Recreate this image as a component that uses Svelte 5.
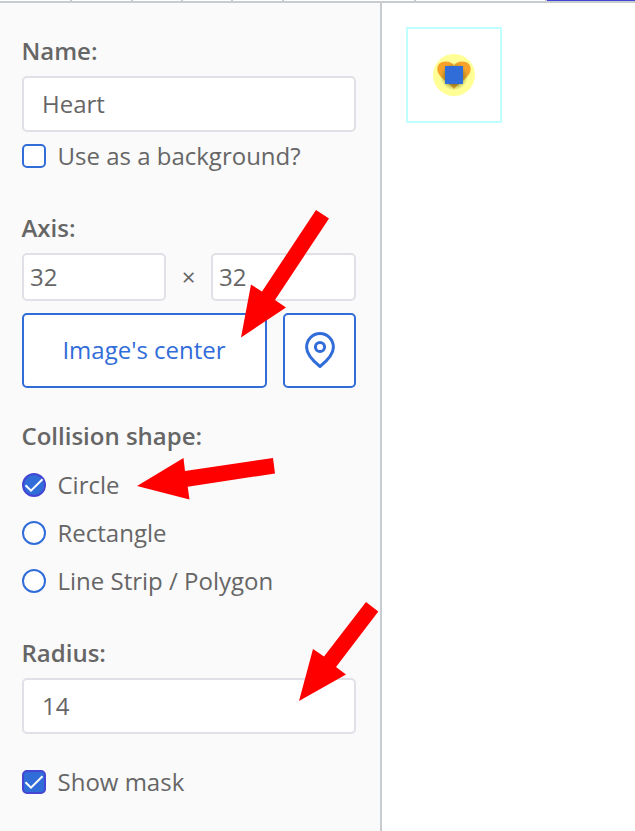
<script>
  let name = $state('Heart');
  let background = $state(false);
  let axisX = $state('32');
  let axisY = $state('32');
  let shape = $state('Circle');
  let radius = $state('14');
  let mask = $state(true);
  const shapes = ['Circle', 'Rectangle', 'Line Strip / Polygon'];
  const ticks = [70, 131, 181, 231, 282, 414, 545];
</script>

{#snippet box(on, round)}
  <span class="box" class:on class:round>
    {#if on}
      <svg width="24" height="24" viewBox="0 0 24 24"><path d="M3.5 12.2 9 17.6 20.5 6.2" fill="none" stroke="#fff" stroke-width="2" /></svg>
    {/if}
  </span>
{/snippet}

<div class="app">
  <header>
    {#each ticks as x}<i class="tick" style="left: {x}px"></i>{/each}
    <i class="active"></i>
  </header>
  <main>
    <aside>
      <label class="title" for="name">Name:</label>
      <input id="name" class="wide" bind:value={name} />
      <label class="option background">
        <input type="checkbox" bind:checked={background} />
        {@render box(background, false)}<span>Use as a background?</span>
      </label>

      <div class="title axis-title">Axis:</div>
      <div class="axis">
        <input class="short" bind:value={axisX} aria-label="X" />
        <span class="times">×</span>
        <input class="short second" bind:value={axisY} aria-label="Y" />
      </div>
      <div class="buttons">
        <button class="center">Image's center</button>
        <button class="pin" aria-label="Pin">
          <svg width="36" height="40" viewBox="0 0 36 40" fill="none" stroke="#316dd9" stroke-width="3">
            <path d="M18 36.5C12.2 31.8 4.6 24.5 4.6 17.2A13.4 13.7 0 0 1 31.4 17.2C31.4 24.5 23.8 31.8 18 36.5Z" stroke-linejoin="round" />
            <circle cx="18" cy="17" r="4.6" />
          </svg>
        </button>
      </div>

      <div class="title shape-title">Collision shape:</div>
      <div class="shapes">
        {#each shapes as s}
          <label class="option">
            <input type="radio" value={s} bind:group={shape} />
            {@render box(shape === s, true)}<span>{s}</span>
          </label>
        {/each}
      </div>

      <label class="title radius-title" for="radius">Radius:</label>
      <input id="radius" class="wide" bind:value={radius} />
      <label class="option mask">
        <input type="checkbox" bind:checked={mask} />
        {@render box(mask, false)}<span>Show mask</span>
      </label>
    </aside>

    <section>
      <svg class="preview" width="96" height="96" viewBox="0 0 96 96">
        <defs>
          <radialGradient id="shade">
            <stop offset="0.55" stop-color="#555a10" stop-opacity="0.6" />
            <stop offset="1" stop-color="#8a8a20" stop-opacity="0" />
          </radialGradient>
        </defs>
        <rect x="1" y="1" width="94" height="94" fill="#fff" stroke="#bfffff" stroke-width="2" />
        <circle cx="48" cy="48" r="21" fill="#ffff96" />
        <path d="M48 62C45.5 58.5 41 56 37.5 52.5C33.5 48.5 31.3 46 31.3 42C31.3 37.5 34.5 34.5 39.5 34.5C44 34.5 47 36 48 39C49 36 52 34.5 56.5 34.5C61.5 34.5 64.7 37.5 64.7 42C64.7 46 62.5 48.5 58.5 52.5C55 56 50.5 58.5 48 62Z" fill="#f8a22b" />
        <circle cx="48" cy="49.5" r="14" fill="url(#shade)" />
        <rect x="39" y="39" width="18" height="18" fill="#316dd9" />
      </svg>
    </section>
  </main>

  <svg class="arrows" width="635" height="831" viewBox="0 0 635 831" fill="#f00">
    <path d="M316 210 329 218.5 275 300 286 307.5 241 337.5 251 284.5 262 291.5Z" />
    <path d="M137 486 183.5 458 185 471 273 458 275 473.5 187.7 486.7 189.5 499.5Z" />
    <path d="M366 602 378.3 611.5 336 667 346 674.5 299 701 313 649 324 656.5Z" />
  </svg>
</div>

<style>
  .app {
    position: relative;
    width: 635px;
    height: 831px;
    overflow: hidden;
    display: flex;
    flex-direction: column;
    background: #fff;
    color: #666;
    font: 24px/36px "Open Sans", sans-serif;
  }
  header {
    position: relative;
    flex: none;
    box-sizing: border-box;
    height: 3px;
    border-bottom: 2px solid #c7ccd1;
  }
  .tick { position: absolute; top: 0; width: 2px; height: 1px; background: #c7ccd1; }
  .active { position: absolute; top: 0; left: 547px; right: 0; height: 1px; background: #4546d3; }
  main { flex: 1; display: flex; min-height: 0; }
  aside {
    box-sizing: border-box;
    width: 382px;
    padding: 30px 24px 0 22px;
    display: flex;
    flex-direction: column;
    background: #fafafa;
    border-right: 2px solid #c7ccd1;
  }
  section { padding: 24px; }
  .preview { display: block; }
  .title { height: 36px; font-weight: 600; margin-bottom: 7px; text-indent: -0.5px; }
  input:not([type]) {
    box-sizing: border-box;
    border: 2px solid #e0e0e6;
    border-radius: 5px;
    background: #fff;
    color: #666;
    font: inherit;
    outline: 0;
    margin: 0;
  }
  input.wide:not([type]) { width: 334px; height: 56px; padding: 0 18px 2px; }
  input.short:not([type]) { width: 144px; height: 48px; padding: 0 6px 2px; }
  input.second:not([type]) { width: 145px; }
  .option { position: relative; height: 36px; display: flex; align-items: center; gap: 11.5px; }
  .option input { position: absolute; opacity: 0; margin: 0; }
  .box {
    box-sizing: border-box;
    width: 24px;
    height: 24px;
    border: 2px solid #316dd9;
    border-radius: 5px;
    background: #fff;
    display: flex;
  }
  .box svg { margin: -2px; flex: none; }
  .box.round { border-radius: 50%; }
  .box.on { background: #316dd9; border-color: #4546d3; }
  .background { margin-top: 6px; }
  .axis-title { margin-top: 36px; }
  .axis { display: flex; justify-content: space-between; height: 48px; align-items: center; }
  .times { line-height: 48px; }
  .buttons { display: flex; gap: 16px; height: 75px; margin-top: 12px; }
  button {
    box-sizing: border-box;
    border: 2px solid #316dd9;
    border-radius: 5px;
    background: #fff;
    color: #316dd9;
    font: inherit;
    padding: 0 0 2px;
  }
  .center { width: 245px; padding-right: 1px; }
  .pin { width: 73px; display: flex; align-items: center; justify-content: center; }
  .shape-title { margin-top: 30px; margin-bottom: 13px; }
  .shapes { display: flex; flex-direction: column; gap: 12px; }
  .radius-title { margin-top: 36px; }
  .mask { margin-top: 30px; }
  .arrows { position: absolute; left: 0; top: 0; pointer-events: none; }
</style>
